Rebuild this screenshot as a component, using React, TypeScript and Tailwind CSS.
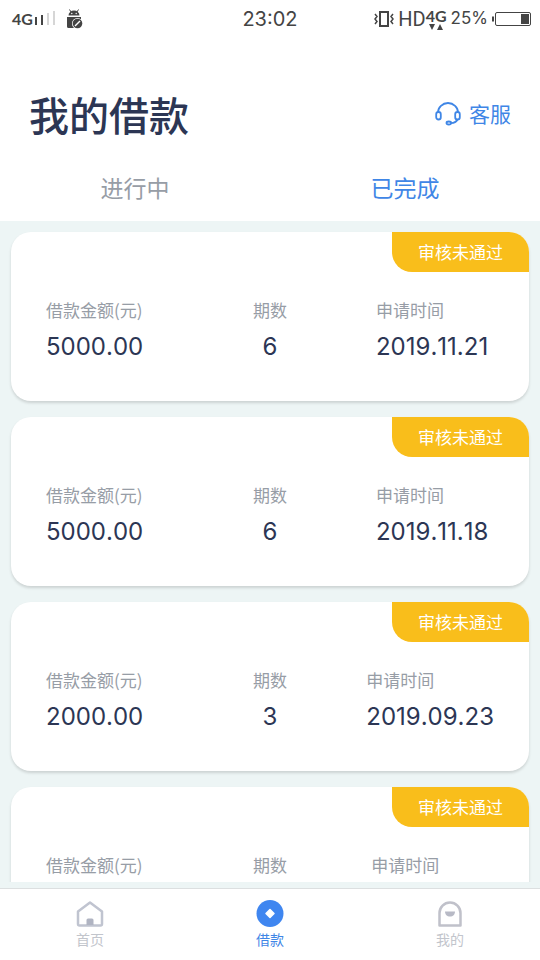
import React, { useState } from "react";
import clsx from "clsx";

interface Loan {
	id: number;
	amount: string;
	periods: number;
	date: string;
	status: string;
}

const loans: Loan[] = [
	{ id: 1, amount: "5000.00", periods: 6, date: "2019.11.21", status: "审核未通过" },
	{ id: 2, amount: "5000.00", periods: 6, date: "2019.11.18", status: "审核未通过" },
	{ id: 3, amount: "2000.00", periods: 3, date: "2019.09.23", status: "审核未通过" },
	{ id: 4, amount: "2000.00", periods: 3, date: "2019.09.12", status: "审核未通过" },
];

const tabs = ["进行中", "已完成"];

const StatusBar: React.FC = () => (
	<div className="grid h-[38px] grid-cols-[1fr_auto_1fr] items-center px-2 text-[#444444]">
		<div className="flex items-center pl-1">
			<span className="font-['Lato',sans-serif] text-base font-bold">4G</span>
			<svg className="ml-0.5 h-4 w-5" viewBox="0 0 20 16">
				<path d="M0 6h2v8H0zM6 4h2v10H6z" fill="#444" />
				<path d="M12 2h2v12h-2zM18 0h2v14h-2z" fill="#d6d6d6" />
			</svg>
			<svg className="ml-3 h-5 w-4" viewBox="0 0 16 20">
				<path d="M1.5 6.5a5.5 5 0 0 1 11 0zM0 8h14v9.5a1.5 1.5 0 0 1-1.5 1.5h-11A1.5 1.5 0 0 1 0 17.5z" fill="#444" />
				<path d="M4 3 2.5 .5M10 3 11.5 .5" stroke="#444" />
				<circle cx="4.8" cy="4.5" r=".7" fill="#fff" />
				<circle cx="9.2" cy="4.5" r=".7" fill="#fff" />
				<circle cx="10.5" cy="14.5" r="5.5" fill="#fff" />
				<circle cx="10.5" cy="14.5" r="4.8" fill="#444" />
				<path d="m8 17 5-5" stroke="#fff" strokeWidth="1.5" />
			</svg>
		</div>
		<time className="font-['Inter',sans-serif] text-xl">23:02</time>
		<div className="flex items-center justify-end">
			<svg className="h-5 w-5" viewBox="0 0 20 20" fill="none" stroke="#444">
				<path d="M6 3h8v14H6z" strokeWidth="2" />
				<path d="m1 5 2 2.5L1 10l2 2.5L1 15M19 5l-2 2.5 2 2.5-2 2.5 2 2.5" strokeWidth="1.5" />
			</svg>
			<span className="ml-1 font-['Roboto',sans-serif] text-xl">HD</span>
			<div className="flex flex-col items-center">
				<span className="font-['Lato',sans-serif] text-base leading-4 font-bold">4G</span>
				<svg className="h-1.5 w-4" viewBox="0 0 16 6" fill="#444">
					<path d="M1 0h6L4 6zM9 6h6l-3-6z" />
				</svg>
			</div>
			<span className="ml-1 font-['Inter',sans-serif] text-[17px]">25%</span>
			<svg className="ml-1 h-4 w-10" viewBox="0 0 40 16">
				<path d="M1 5.5v5" stroke="#444" strokeWidth="2" />
				<rect x="3.5" y="1.5" width="35" height="13" rx="1.5" fill="none" stroke="#444" />
				<path d="M29 3h8v10h-8z" fill="#444" />
			</svg>
		</div>
	</div>
);

const HeadsetIcon: React.FC = () => (
	<svg className="h-6 w-[26px]" viewBox="0 0 26 24" fill="none" stroke="#3f86e6" strokeWidth="1.8">
		<path d="M3 10.5a10 9.5 0 0 1 20 0" />
		<rect x="1.2" y="10" width="4.6" height="7.5" rx="2.3" />
		<rect x="20.2" y="10" width="4.6" height="7.5" rx="2.3" />
		<path d="M22.5 17.5c-1 2-3.5 3.5-6.5 3.7" />
		<ellipse cx="13.8" cy="21" rx="2.3" ry="1.5" />
	</svg>
);

const HomeIcon: React.FC = () => (
	<svg className="h-7 w-7" viewBox="0 0 28 28">
		<path d="M14 2.5 2 11.5V24A1.5 1.5 0 0 0 3.5 25.5h21a1.5 1.5 0 0 0 1.5-1.5V11.5z" fill="none" stroke="#c0c4d0" strokeWidth="2.5" strokeLinejoin="round" />
		<path d="M10.5 25v-5a1.5 1.5 0 0 1 1.5-1.5h4a1.5 1.5 0 0 1 1.5 1.5v5z" fill="#b0b4c2" />
	</svg>
);

const LoanIcon: React.FC = () => (
	<svg className="h-7 w-7" viewBox="0 0 28 28">
		<circle cx="14" cy="13.5" r="13.5" fill="#3f86f0" />
		<path d="m14 9.5 4 4-4 4-4-4z" fill="#fff" stroke="#fff" strokeWidth="1.5" strokeLinejoin="round" />
	</svg>
);

const MineIcon: React.FC = () => (
	<svg className="h-7 w-7" viewBox="0 0 28 28">
		<path d="M3.5 25.5V13a10.5 10.5 0 0 1 21 0v12.5z" fill="none" stroke="#c0c1ca" strokeWidth="2.5" strokeLinejoin="round" />
		<path d="M9 11.5h10c0 3-2 5-5 5s-5-2-5-5z" fill="#b8bac6" />
	</svg>
);

const navItems = [
	{ label: "首页", icon: <HomeIcon />, active: false },
	{ label: "借款", icon: <LoanIcon />, active: true },
	{ label: "我的", icon: <MineIcon />, active: false },
];

const Field: React.FC<{ label: string; value: string | number; className?: string }> = ({
	label,
	value,
	className,
}) => (
	<div className={className}>
		<dt className="text-[17px] leading-6 text-[#979da6]">{label}</dt>
		<dd className="mt-[9px] font-['Inter',sans-serif] text-2xl leading-8 text-[#2c3654] [font-kerning:none]">
			{value}
		</dd>
	</div>
);

const LoanCard: React.FC<{ loan: Loan }> = ({ loan }) => (
	<li className="shrink-0 overflow-hidden rounded-[20px] bg-white pb-[38px] shadow-[0_2px_3px_rgba(0,0,0,0.14)]">
		<div className="flex justify-end">
			<span className="rounded-bl-[20px] bg-[#f9be1b] px-[26px] text-[17px] leading-10 text-white">
				{loan.status}
			</span>
		</div>
		<dl className="mt-[26px] grid grid-cols-3 px-[35px]">
			<Field label="借款金额(元)" value={loan.amount} />
			<Field label="期数" value={loan.periods} className="text-center" />
			<Field label="申请时间" value={loan.date} className="min-w-[118px] justify-self-end" />
		</dl>
	</li>
);

const App: React.FC = () => {
	const [activeTab, setActiveTab] = useState("已完成");

	return (
		<div className="flex h-screen flex-col bg-[#edf5f5] font-['Noto_Sans_CJK_SC',sans-serif]">
			<header className="bg-white">
				<StatusBar />
				<div className="flex items-center justify-between px-[29px] pt-[46px]">
					<h1 className="text-[40px] leading-[60px] font-medium text-[#2c3654]">我的借款</h1>
					<button type="button" className="flex items-center gap-2 text-[21px] text-[#3f86e6]">
						<HeadsetIcon />
						客服
					</button>
				</div>
				<div className="mt-[11px] grid grid-cols-2 pb-0.5">
					{tabs.map((tab) => (
						<button
							key={tab}
							type="button"
							onClick={() => setActiveTab(tab)}
							className={clsx(
								"h-16 text-[23px]",
								activeTab === tab ? "text-[#3f86e6]" : "text-[#979da6]"
							)}
						>
							{tab}
						</button>
					))}
				</div>
			</header>

			{/* Loan list */}
			<main className="mb-1.5 min-h-0 flex-1 overflow-y-auto [scrollbar-width:none]">
				<ul className="flex flex-col gap-4 px-[11px] pt-[11px] pb-4">
					{loans.map((loan) => (
						<LoanCard key={loan.id} loan={loan} />
					))}
				</ul>
			</main>

			{/* Bottom navigation */}
			<nav className="grid h-[72px] grid-cols-3 border-t border-[#dcdfe0] bg-white">
				{navItems.map((item) => (
					<a
						key={item.label}
						href="#"
						className={clsx(
							"flex flex-col items-center pt-[11px] text-sm",
							item.active ? "text-[#3f86e6]" : "text-[#c2c5cc]"
						)}
					>
						{item.icon}
						<span className="mt-px">{item.label}</span>
					</a>
				))}
			</nav>
		</div>
	);
};

export default App;
